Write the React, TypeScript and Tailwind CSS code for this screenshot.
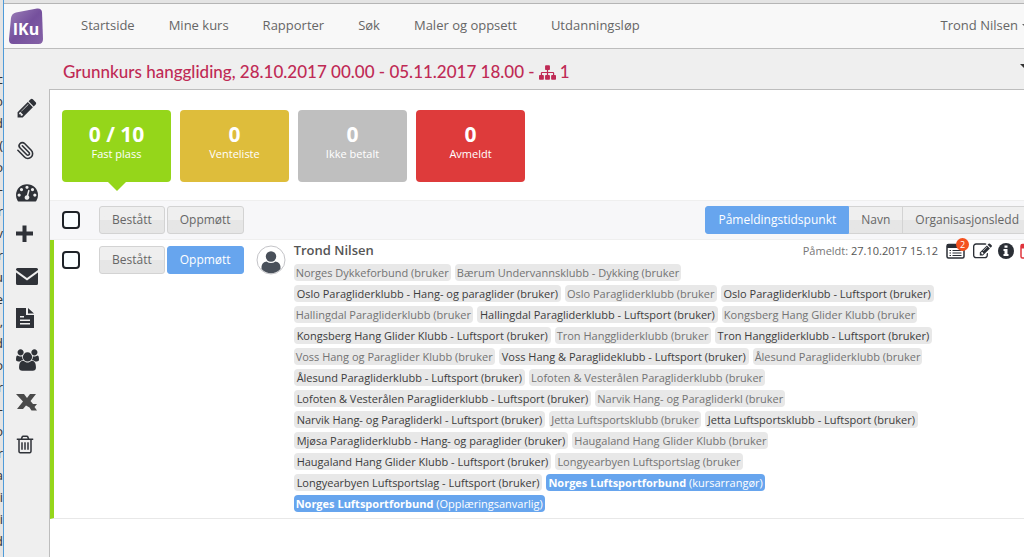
import type { ReactNode } from "react";
import { Paperclip } from "lucide-react";

const NAV = ["Startside", "Mine kurs", "Rapporter", "Søk", "Maler og oppsett", "Utdanningsløp"];

const CARDS = [
  { value: "0 / 10", label: "Fast plass", color: "bg-[#95d61a]", active: true },
  { value: "0", label: "Venteliste", color: "bg-[#debd3b]" },
  { value: "0", label: "Ikke betalt", color: "bg-[#bfbfbf]" },
  { value: "0", label: "Avmeldt", color: "bg-[#de3b3b]" },
];

type Tag = { text: string; role?: string; kind: "org" | "group" | "owner" };

const org = (text: string): Tag => ({ text: `${text} (bruker`, kind: "org" });
const group = (text: string): Tag => ({ text: `${text} (bruker)`, kind: "group" });

const TAGS: Tag[] = [
  org("Norges Dykkeforbund"),
  org("Bærum Undervannsklubb - Dykking"),
  group("Oslo Paragliderklubb - Hang- og paraglider"),
  org("Oslo Paragliderklubb"),
  group("Oslo Paragliderklubb - Luftsport"),
  org("Hallingdal Paragliderklubb"),
  group("Hallingdal Paragliderklubb - Luftsport"),
  org("Kongsberg Hang Glider Klubb"),
  group("Kongsberg Hang Glider Klubb - Luftsport"),
  org("Tron Hanggliderklubb"),
  group("Tron Hanggliderklubb - Luftsport"),
  org("Voss Hang og Paraglider Klubb"),
  group("Voss Hang & Paraglideklubb - Luftsport"),
  org("Ålesund Paragliderklubb"),
  group("Ålesund Paragliderklubb - Luftsport"),
  org("Lofoten & Vesterålen Paragliderklubb"),
  group("Lofoten & Vesterålen Paragliderklubb - Luftsport"),
  org("Narvik Hang- og Paragliderkl"),
  group("Narvik Hang- og Paragliderkl - Luftsport"),
  org("Jetta Luftsportsklubb"),
  group("Jetta Luftsportsklubb - Luftsport"),
  group("Mjøsa Paragliderklubb - Hang- og paraglider"),
  org("Haugaland Hang Glider Klubb"),
  group("Haugaland Hang Glider Klubb - Luftsport"),
  org("Longyearbyen Luftsportslag"),
  group("Longyearbyen Luftsportslag - Luftsport"),
  { text: "Norges Luftsportforbund", role: "(kursarrangør)", kind: "owner" },
  { text: "Norges Luftsportforbund", role: "(Opplæringsanvarlig)", kind: "owner" },
];

const TAG_STYLE = {
  org: "bg-[#e8e8e8] px-[2px] text-[#737373]",
  group: "bg-[#e8e8e8] px-[3px] text-[#3c3c3c]",
  owner: "bg-[#67a5ee] px-[2px] text-white",
};

const Glyph = ({ d, box = "0 0 1792 1792", className = "h-5 w-5" }: { d: string; box?: string; className?: string }) => (
  <svg viewBox={box} fill="currentColor" className={className} aria-hidden="true">
    <path d={d} />
  </svg>
);

const PENCIL =
  "M491 1536l91-91-235-235-91 91v107h128v128h107zm523-928q0-22-22-22-10 0-17 7l-542 542q-7 7-7 17 0 22 22 22 10 0 17-7l542-542q7-7 7-17zm-54-192l416 416-832 832h-416v-416zm683 96q0 53-37 90l-166 166-416-416 166-165q36-38 90-38 53 0 91 38l235 234q37 39 37 91z";
const GAUGE =
  "M384 1152q0-53-37.5-90.5t-90.5-37.5-90.5 37.5-37.5 90.5 37.5 90.5 90.5 37.5 90.5-37.5 37.5-90.5zm192-448q0-53-37.5-90.5t-90.5-37.5-90.5 37.5-37.5 90.5 37.5 90.5 90.5 37.5 90.5-37.5 37.5-90.5zm428 481l101-382q6-26-7.5-48.5t-38.5-29.5-48 6.5-30 39.5l-101 382q-60 5-107 43.5t-63 98.5q-20 77 20 146t117 89 146-20 89-117q16-60-6-117t-72-91zm660-33q0-53-37.5-90.5t-90.5-37.5-90.5 37.5-37.5 90.5 37.5 90.5 90.5 37.5 90.5-37.5 37.5-90.5zm-640-640q0-53-37.5-90.5t-90.5-37.5-90.5 37.5-37.5 90.5 37.5 90.5 90.5 37.5 90.5-37.5 37.5-90.5zm448 192q0-53-37.5-90.5t-90.5-37.5-90.5 37.5-37.5 90.5 37.5 90.5 90.5 37.5 90.5-37.5 37.5-90.5zm320 448q0 261-141 483-19 29-54 29h-1402q-35 0-54-29-141-221-141-483 0-182 71-348t191-286 286-191 348-71 348 71 286 191 191 286 71 348z";
const USERS =
  "M593 896q-162 5-265 128h-134q-82 0-138-40.5t-56-118.5q0-353 124-353 6 0 43.5 21t97.5 42.5 119 21.5q67 0 133-23-5 37-5 66 0 139 81 256zm1071 637q0 120-73 189.5t-194 69.5h-874q-121 0-194-69.5t-73-189.5q0-53 3.5-103.5t14-109 26.5-108.5 43-97.5 62-81 85.5-53.5 111.5-20q10 0 43 21.5t73 48 107 48 135 21.5 135-21.5 107-48 73-48 43-21.5q61 0 111.5 20t85.5 53.5 62 81 43 97.5 26.5 108.5 14 109 3.5 103.5zm-1024-1277q0 106-75 181t-181 75-181-75-75-181 75-181 181-75 181 75 75 181zm704 384q0 159-112.5 271.5t-271.5 112.5-271.5-112.5-112.5-271.5 112.5-271.5 271.5-112.5 271.5 112.5 112.5 271.5zm576 225q0 78-56 118.5t-138 40.5h-134q-103-123-265-128 81-117 81-256 0-29-5-66 66 23 133 23 59 0 119-21.5t97.5-42.5 43.5-21q124 0 124 353zm-128-609q0 106-75 181t-181 75-181-75-75-181 75-181 181-75 181 75 75 181z";
const TRASH =
  "M704 736v576q0 14-9 23t-23 9h-64q-14 0-23-9t-9-23v-576q0-14 9-23t23-9h64q14 0 23 9t9 23zm256 0v576q0 14-9 23t-23 9h-64q-14 0-23-9t-9-23v-576q0-14 9-23t23-9h64q14 0 23 9t9 23zm256 0v576q0 14-9 23t-23 9h-64q-14 0-23-9t-9-23v-576q0-14 9-23t23-9h64q14 0 23 9t9 23zm128 724v-948h-896v948q0 22 7 40.5t14.5 27 10.5 8.500h832q3 0 10.5-8.5t14.5-27 7-40.5zm-672-1076h448l-48-117q-7-9-17-11h-317q-10 2-17 11zm928 32v64q0 14-9 23t-23 9h-96v948q0 83-47 143.5t-113 60.5h-832q-66 0-113-58.5t-47-141.5v-952h-96q-14 0-23-9t-9-23v-64q0-14 9-23t23-9h309l70-167q15-37 54-63t79-26h320q40 0 79 26t54 63l70 167h309q14 0 23 9t9 23z";
const SITEMAP =
  "M1792 1248v320q0 40-28 68t-68 28h-320q-40 0-68-28t-28-68v-320q0-40 28-68t68-28h96v-192h-512v192h96q40 0 68 28t28 68v320q0 40-28 68t-68 28h-320q-40 0-68-28t-28-68v-320q0-40 28-68t68-28h96v-192h-512v192h96q40 0 68 28t28 68v320q0 40-28 68t-68 28h-320q-40 0-68-28t-28-68v-320q0-40 28-68t68-28h96v-192q0-52 38-90t90-38h512v-192h-96q-40 0-68-28t-28-68v-320q0-40 28-68t68-28h320q40 0 68 28t28 68v320q0 40-28 68t-68 28h-96v192h512q52 0 90 38t38 90v192h96q40 0 68 28t28 68z";
const EDIT =
  "M888 1184l116-116-152-152-116 116v56h96v96h56zm440-720q-16-16-33 1l-350 350q-17 17-1 33t33-1l350-350q17-17 1-33zm80 594v190q0 119-84.5 203.5t-203.5 84.5h-832q-119 0-203.5-84.5t-84.5-203.5v-832q0-119 84.5-203.5t203.5-84.5h832q63 0 117 25 15 7 18 23 3 17-9 29l-49 49q-14 14-32 8-23-6-45-6h-832q-66 0-113 47t-47 113v832q0 66 47 113t113 47h832q66 0 113-47t47-113v-126q0-13 9-22l64-64q15-15 35-7t20 29zm-96-738l288 288-672 672h-288v-288zm444 132l-92 92-288-288 92-92q28-28 68-28t68 28l152 152q28 28 28 68t-28 68z";

const TOOLS: { name: string; icon: ReactNode }[] = [
  { name: "Rediger", icon: <Glyph d={PENCIL} className="h-[22px] w-[22px]" /> },
  { name: "Vedlegg", icon: <Paperclip className="h-[19px] w-[19px] -scale-x-100" strokeWidth={2} /> },
  { name: "Oversikt", icon: <Glyph d={GAUGE} className="h-[22px] w-[22px]" /> },
  { name: "Legg til", icon: <Glyph d="M6.500 0.500h4v6h6.500v4h-6.500v6.500h-4v-6.500h-6.500v-4h6.500z" box="0 0 22 18" className="h-[18px] w-[22px]" /> },
  { name: "Send e-post", icon: <Glyph d="M0 2.500Q0 1 1.500 1H20.500Q22 1 22 2.500V3L11 11 0 3zM0 5.500L11 13.500 22 5.500V16.500Q22 18 20.500 18H1.500Q0 18 0 16.500z" box="0 0 22 19" className="h-[19px] w-[22px]" /> },
  { name: "Dokument", icon: <Glyph d="M0 0H10V7H18V20H0zM12 0L18 5.500H12zM4 8V9.500H8V8zM4 11.500V13H14V11.500zM4 15V16.500H14V15z" box="0 0 22 20" className="h-5 w-[22px]" /> },
  { name: "Deltakere", icon: <Glyph d={USERS} box="0 0 1920 1792" className="h-[22px] w-[23px]" /> },
  { name: "Eksporter til Excel", icon: <span className="text-[#4a4a4a]"><Glyph d="M0 1H8L11 5 14 1H20L14.500 8 17 11H21L18.500 14 21 17.500H15.500L13.500 14.500 10 12.500 7 16H1L7 8.500z" box="0 0 22 18" className="h-[18px] w-[22px]" /></span> },
  { name: "Slett", icon: <Glyph d={TRASH} box="128 0 1536 1792" className="h-[21px] w-[18px]" /> },
];

// the window behind shows through as a thin strip
const BACKDROP = ["c", "b", "d", "(", "o", "-", "r", "v", "r", "u", "e", ",", "d", "o", "r", "-", "o", "r", "a", "i", "i", "d"];

const CHECKBOX = "block h-[18px] w-[18px] shrink-0 appearance-none rounded-[4px] border-2 border-[#1c2127] bg-[#f9fdff]";
const BUTTON = "h-7 border border-[#d3d3d3] bg-linear-to-b from-[#efefef] from-50% to-[#e6e6e6] to-50% px-3 text-[12px] text-[#666]";
const BUTTON_ON = "h-7 border border-[#67a5ee] bg-[#67a5ee] px-3 text-[12px] text-white";

const Logo = () => (
  <svg viewBox="0 0 36 38" className="h-[38px] w-9" role="img" aria-label="IKu">
    <defs>
      <linearGradient id="logo" x1="0" y1="0" x2="1" y2="1">
        <stop offset="0" stopColor="#9c80b8" />
        <stop offset="0.5" stopColor="#75509d" />
        <stop offset="1" stopColor="#8562a6" />
      </linearGradient>
    </defs>
    <path d="M8 5.500L29 1.500Q33.500 1 34 5L35 32Q35 37 30.500 37L5 37Q0.600 37 1 32L3 11Q3.600 6.500 8 5.500Z" fill="url(#logo)" />
    <text x="18" y="28" textAnchor="middle" fill="#fff" fontFamily="Open Sans, sans-serif" fontWeight="700" fontSize="16">
      IKu
    </text>
  </svg>
);

const Header = () => (
  <header className="flex h-[45px] items-center border-b border-[#bdbdbd] bg-[#f8f8f8] pl-1 text-[13px] text-[#666]">
    <a href="#">
      <Logo />
    </a>
    <nav className="flex flex-1 gap-[34px] pl-[37px]">
      {NAV.map((item) => (
        <a key={item} href="#">
          {item}
        </a>
      ))}
    </nav>
    <button className="-mr-[6px] flex items-center gap-1">
      Trond Nilsen
      <span className="border-x-4 border-t-4 border-x-transparent border-t-[#666]" />
    </button>
  </header>
);

const StatCards = () => (
  <div className="flex gap-[9px] px-3 pt-5 pb-[18px]">
    {CARDS.map((card) => (
      <button
        key={card.label}
        className={`relative flex h-[72px] w-[109px] flex-col items-center rounded-[4px] pt-3 text-white ${card.color}`}
      >
        <span className="text-[21px] leading-6 font-bold">{card.value}</span>
        <span className="text-[11px] leading-4">{card.label}</span>
        {card.active && (
          <span className="absolute top-full left-1/2 -translate-x-1/2 border-x-[9px] border-t-[9px] border-x-transparent border-t-[#95d61a]" />
        )}
      </button>
    ))}
  </div>
);

const ListToolbar = () => (
  <div className="flex h-10 items-center border-y border-[#efefef] bg-[#f7f7f9] pl-3">
    <input type="checkbox" aria-label="Velg alle" className={CHECKBOX} />
    <div className="flex flex-1 gap-[2px] pl-[19px]">
      <button className={`${BUTTON} rounded-[3px]`}>Bestått</button>
      <button className={`${BUTTON} rounded-[3px]`}>Oppmøtt</button>
    </div>
    <div className="-mr-2 flex">
      <button className={`${BUTTON_ON} rounded-l-[3px]`}>Påmeldingstidspunkt</button>
      <button className={`${BUTTON} border-l-0`}>Navn</button>
      <button className={`${BUTTON} rounded-r-[3px] border-l-0`}>Organisasjonsledd</button>
    </div>
  </div>
);

const RowActions = () => (
  <div className="-mr-3 flex items-center text-[#2b2f36]">
    <span className="mr-2 text-[11px] text-[#777]">
      Påmeldt: <span className="text-[#555]">27.10.2017 15.12</span>
    </span>
    <button aria-label="Skjema" className="relative mr-2">
      <svg viewBox="0 0 19 16" className="h-4 w-[19px]" aria-hidden="true">
        <rect x="1" y="1.500" width="17" height="13.500" rx="1.500" fill="#fff" stroke="currentColor" strokeWidth="1.500" />
        <path d="M1 1h17v4h-17z" fill="currentColor" />
        <path d="M3.500 7.500h1.500M3.500 10h1.500M3.500 12.500h1.500M6.500 7.500h9M6.500 10h9M6.500 12.500h9" stroke="currentColor" strokeWidth="1.200" />
      </svg>
      <span className="absolute -top-[5px] -right-1 flex h-[13px] w-[13px] items-center justify-center rounded-full bg-[#f4511e] text-[9px] leading-3 text-white">
        2
      </span>
    </button>
    <button aria-label="Rediger" className="mr-[6px]">
      <Glyph d={EDIT} className="h-[19px] w-[19px]" />
    </button>
    <button aria-label="Informasjon" className="mr-[6px]">
      <svg viewBox="0 0 16 16" className="h-4 w-4" aria-hidden="true">
        <circle cx="8" cy="8" r="8" fill="currentColor" />
        <path d="M6.500 2.500h3v2.300h-3zM5.500 6h4v5h1v2h-5v-2h1v-3h-1z" fill="#fff" />
      </svg>
    </button>
    <button aria-label="Avmeld" className="text-[#e0343c]">
      <svg viewBox="0 0 16 16" className="h-4 w-4" aria-hidden="true">
        <rect x="1" y="1.500" width="14" height="13.500" rx="1.500" fill="#fff" stroke="currentColor" strokeWidth="1.500" />
        <path d="M1 1h14v4.500h-14z" fill="currentColor" />
        <path d="M5 8l6 5M11 8l-6 5" stroke="currentColor" strokeWidth="1.500" />
      </svg>
    </button>
  </div>
);

const Avatar = () => (
  <svg viewBox="0 0 30 30" className="h-[30px] w-[30px] shrink-0" aria-hidden="true">
    <circle cx="15" cy="15" r="14" fill="#fff" stroke="#c4c4c8" />
    <circle cx="15" cy="11.500" r="5.200" fill="#49505a" />
    <path d="M5.500 24Q5 17 10.500 16.500Q15 19.500 19.500 16.500Q25 17 24.500 24Q20 28.300 15 28.300T5.500 24Z" fill="#49505a" />
  </svg>
);

const Participant = () => (
  <div className="flex items-start border-b border-l-4 border-b-[#e8e8e8] border-l-[#95d61a] pl-2">
    <div className="flex h-10 shrink-0 items-center">
      <input type="checkbox" aria-label="Velg Trond Nilsen" className={CHECKBOX} />
      <div className="flex gap-[2px] pr-3 pl-[19px]">
        <button className={`${BUTTON} rounded-[3px]`}>Bestått</button>
        <button className={`${BUTTON_ON} rounded-[3px]`}>Oppmøtt</button>
      </div>
      <Avatar />
    </div>
    <div className="min-w-0 flex-1 pb-1 pl-2">
      <div className="flex h-[22px] items-center justify-between">
        <h2 className="text-[13px] font-semibold text-[#555]">Trond Nilsen</h2>
        <RowActions />
      </div>
      <ul className="flex flex-wrap gap-x-1 pr-[88px]">
        {TAGS.map((tag, i) => (
          <li key={i} className="flex h-[21px] items-center text-[11px]">
            <span className={`rounded-[4px] leading-[17px] ${TAG_STYLE[tag.kind]}`}>
              {tag.role ? <b>{tag.text}</b> : tag.text} {tag.role}
            </span>
          </li>
        ))}
      </ul>
    </div>
  </div>
);

export default function App() {
  return (
    <div className="flex min-h-screen overflow-hidden bg-[#efefef] font-['Open_Sans',sans-serif]">
      <div className="flex w-1 shrink-0 flex-col overflow-hidden border-r border-[#4f9bd9] bg-[#e4e4e4] pt-[68px] text-[13px] text-[#333]" aria-hidden="true">
        {BACKDROP.map((letter, i) => (
          <span key={i} className="flex h-[22px] w-[3px] items-center justify-end leading-[22px]">
            {letter}
          </span>
        ))}
      </div>
      <div className="flex min-w-0 flex-1 flex-col border-t-[3px] border-t-[#e4e4e4]">
        <div className="h-px bg-[#b5b5b5]" />
        <Header />
        <div className="flex flex-1">
          <aside className="flex w-[45px] shrink-0 flex-col pt-[38px] text-[#2f3238]">
            {TOOLS.map((tool) => (
              <button key={tool.name} aria-label={tool.name} className="flex h-[42px] items-center pl-3">
                {tool.icon}
              </button>
            ))}
          </aside>
          <div className="flex min-w-0 flex-1 flex-col">
            <div className="flex h-10 items-center justify-between pt-[6px] pl-[14px]">
              <h1 className="flex items-center gap-1 font-[Lato,sans-serif] text-[17px] font-medium text-[#bf2a55]">
                Grunnkurs hanggliding, 28.10.2017 00.00 - 05.11.2017 18.00 -
                <Glyph d={SITEMAP} className="h-[17px] w-[17px]" />1
              </h1>
              <button aria-label="Flere valg" className="-mr-1 mb-3 border-x-4 border-t-4 border-x-transparent border-t-[#333]" />
            </div>
            <main className="flex-1 border-t border-l border-[#bdbdbd] bg-white">
              <StatCards />
              <ListToolbar />
              <Participant />
            </main>
          </div>
        </div>
      </div>
    </div>
  );
}
